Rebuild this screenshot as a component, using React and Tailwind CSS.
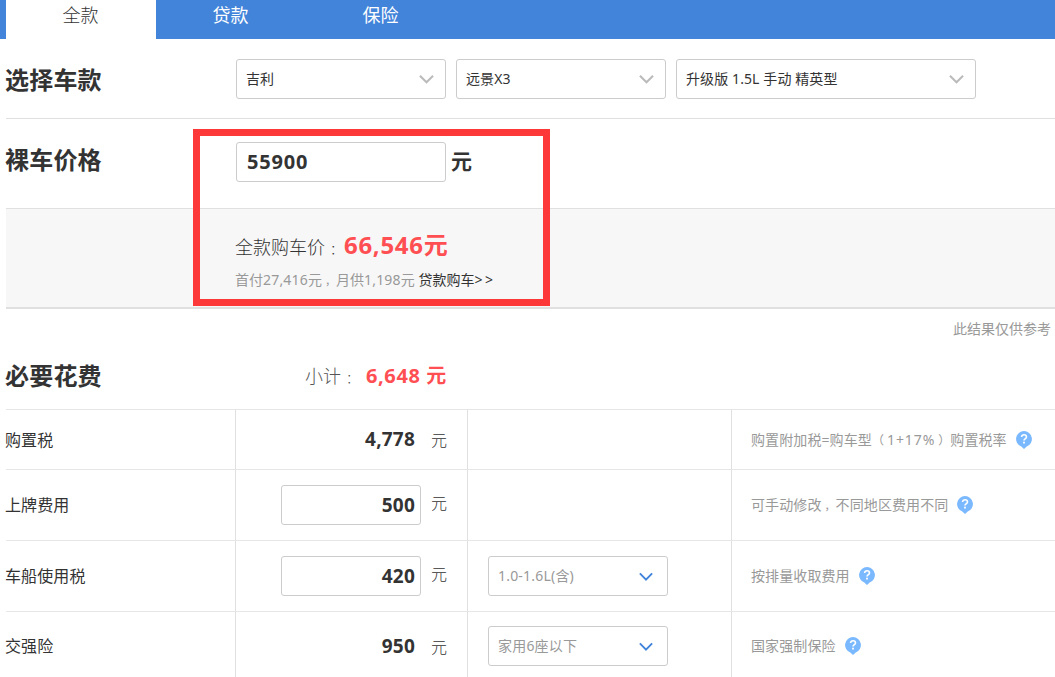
const tabs = ['全款', '贷款', '保险']

const carSelects = [
  { value: '吉利', width: 'w-[210px]' },
  { value: '远景X3', width: 'w-[210px]' },
  { value: '升级版 1.5L 手动 精英型', width: 'w-[300px]' },
]

const fees = [
  { name: '购置税', amount: '4,778', note: <>购置附加税=购车型<Mark className="pr-[3px] text-[12px]">（</Mark><span className="tracking-[0.9px]">1+17%</span><Mark className="pl-[3px] text-[12px]">）</Mark>购置税率</>, height: 'h-[60px]' },
  { name: '上牌费用', amount: '500', editable: true, note: <>可手动修改<Mark>，</Mark>不同地区费用不同</>, height: 'h-[71px]' },
  { name: '车船使用税', amount: '420', editable: true, option: '1.0-1.6L(含)', note: '按排量收取费用', height: 'h-[71px]' },
  { name: '交强险', amount: '950', option: '家用6座以下', note: '国家强制保险', height: 'h-[69px]' },
]

// Full-width punctuation, padded towards the middle of its cell
function Mark({ children, className = 'pl-[3px] text-[11px]' }) {
  return <span className={className}>{children}</span>
}

function Chevron({ className }) {
  return (
    <svg viewBox="0 0 16 10" fill="none" stroke="currentColor" className={className}>
      <path d="M1 1.5 8 8.5l7-7" strokeWidth="2.2" />
    </svg>
  )
}

function HelpIcon() {
  return (
    <svg width="16" height="18" viewBox="0 0 16 18" className="shrink-0">
      <path d="M8 0a8 8 0 0 1 2.7 15.5L8 18l-2.7-2.5A8 8 0 0 1 8 0z" fill="#7ab8ff" />
      <path d="M5.6 6.1C5.6 4.6 6.6 3.8 8 3.8s2.5.8 2.5 2.1C10.5 7.5 8 7.6 8 9.6" fill="none" stroke="#fff" strokeWidth="1.6" />
      <rect x="7.1" y="10.7" width="1.8" height="1.8" fill="#fff" />
    </svg>
  )
}

function FeeRow({ fee }) {
  return (
    <div className={`flex border-t border-[#e6e6e6] ${fee.height}`}>
      <div className="-ml-px flex w-[230px] items-center text-base tracking-[0.1px]">{fee.name}</div>
      <div className="flex w-[232px] items-center justify-end border-l border-[#e0e0e0] pr-5">
        {fee.editable ? (
          <input
            defaultValue={fee.amount}
            className="h-10 w-[140px] rounded-[3px] border border-[#ccc] pr-[5px] text-right text-[19px] font-bold tracking-[0.2px]"
          />
        ) : (
          <span className="pr-1.5 text-[19px] font-bold tracking-[0.2px]">{fee.amount}</span>
        )}
        <span className={`ml-[10px] text-base font-light ${fee.editable ? 'pb-1' : 'pt-px'}`}>元</span>
      </div>
      <div className="flex w-[264px] items-center border-l border-[#e0e0e0] pl-5">
        {fee.option && (
          <div className="flex h-10 w-[180px] items-center justify-between rounded-[3px] border border-[#ccc] pr-[14px] pl-[9px] text-sm tracking-[0.2px] text-[#999]">
            {fee.option}
            <Chevron className="h-[9px] w-[14px] text-[#4284da]" />
          </div>
        )}
      </div>
      <div className="flex flex-1 items-center gap-[9px] border-l border-[#e0e0e0] pl-[19px] text-sm whitespace-nowrap text-[#999]">
        <span className="tracking-[0.1px]">{fee.note}</span>
        <HelpIcon />
      </div>
    </div>
  )
}

export default function App() {
  return (
    <div className="relative h-[677px] w-[1055px] overflow-hidden bg-white font-['Noto_Sans','Noto_Sans_CJK_SC',sans-serif] leading-none font-normal text-[#333]">
      <nav className="flex h-[39px] bg-[#4284da] pl-1.5 text-lg leading-[30px]">
        {tabs.map((tab, index) => (
          <div
            key={tab}
            className={`w-[150px] pr-px text-center ${index === 0 ? 'bg-white leading-[31px] font-light' : 'text-white'}`}
          >
            {tab}
          </div>
        ))}
      </nav>

      <div className="pl-1.5">
        {/* Car model */}
        <section className="flex h-20 items-center border-b border-[#e0e0e0]">
          <h2 className="-ml-px w-[231px] pt-0.5 text-2xl leading-none font-bold tracking-[0.2px]">选择车款</h2>
          <div className="flex gap-2.5">
            {carSelects.map((select) => (
              <div
                key={select.value}
                className={`flex h-10 items-center justify-between rounded-[3px] border border-[#ccc] pt-px pr-[11px] pl-[9px] text-sm tracking-[0.1px] ${select.width}`}
              >
                {select.value}
                <Chevron className="h-[10px] w-[15px] text-[#bbb]" />
              </div>
            ))}
          </div>
        </section>

        {/* Bare price */}
        <section className="flex h-[90px] border-b border-[#e0e0e0] pt-[23px]">
          <h2 className="-ml-px w-[231px] pt-[6px] text-2xl leading-none font-bold tracking-[0.2px]">裸车价格</h2>
          <input
            defaultValue="55900"
            className="h-10 w-[210px] rounded-[3px] border border-[#ccc] pb-0.5 pl-2.5 text-xl font-bold tracking-[0.8px]"
          />
          <span className="pt-[9px] pl-[5px] text-[21px] leading-none font-bold">元</span>
        </section>

        {/* Total */}
        <section className="h-[100px] border-b-2 border-[#e0e0e0] bg-[#f7f7f7] pt-[21px] pl-[229px]">
          <div className="flex h-[30px] items-center text-lg">
            <span className="pt-1 font-light">全款购车价<Mark className="pl-[5px] text-[13px]">：</Mark></span>
            <span className="pl-px text-2xl font-bold tracking-[0.7px] text-[#ff4f53]">66,546元</span>
          </div>
          <p className="pt-[12px] text-sm leading-4 text-[#999]">
            首付<span className="tracking-[0.2px]">27,416</span>元<Mark>，</Mark>月供<span className="tracking-[0.2px]">1,198</span>元 <a className="text-[#333]">贷款购车<span className="tracking-[2.5px]">&gt;&gt;</span></a>
          </p>
        </section>

        <p className="h-9 pt-3 pr-1 text-right text-sm leading-4 text-[#999]">此结果仅供参考</p>

        {/* Required costs */}
        <div className="-mt-px flex h-[65px] items-center pb-0.5">
          <h2 className="-ml-px w-[300px] text-2xl leading-none font-bold tracking-[0.2px]">必要花费</h2>
          <span className="text-lg font-light text-[#555]">小计<Mark className="pl-[5px] text-[13px]">：</Mark></span>
          <span className="ml-[7px] text-xl font-bold tracking-[0.6px] text-[#ff4f53]">6,648 元</span>
        </div>
        {fees.map((fee) => (
          <FeeRow key={fee.name} fee={fee} />
        ))}
      </div>

      {/* Highlight frame over the price area */}
      <div className="pointer-events-none absolute top-[129px] left-[193px] h-[177px] w-[357px] border-7 border-[#fd3838]" />
    </div>
  )
}
